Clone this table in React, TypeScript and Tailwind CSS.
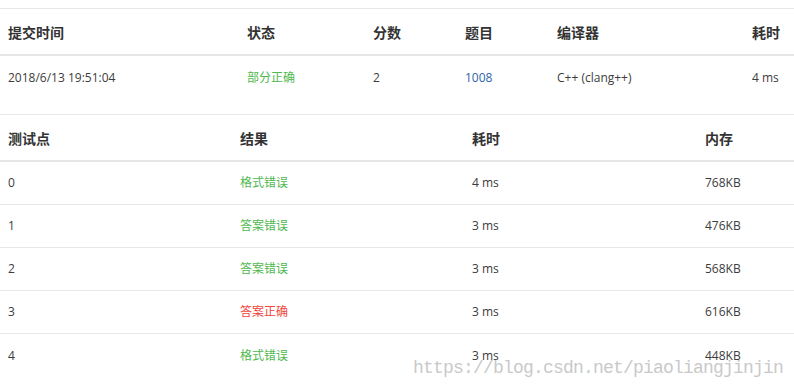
const summaryHead = ["提交时间", "状态", "分数", "题目", "编译器", "耗时"];

type Case = { id: string; result: string; ok: boolean; time: string; mem: string };

const cases: Case[] = [
  { id: "0", result: "格式错误", ok: false, time: "4 ms", mem: "768KB" },
  { id: "1", result: "答案错误", ok: false, time: "3 ms", mem: "476KB" },
  { id: "2", result: "答案错误", ok: false, time: "3 ms", mem: "568KB" },
  { id: "3", result: "答案正确", ok: true, time: "3 ms", mem: "616KB" },
  { id: "4", result: "格式错误", ok: false, time: "3 ms", mem: "448KB" },
];

const font = "font-['Open_Sans','Noto_Sans_CJK_SC',sans-serif]";

export default function App() {
  return (
    <div className={`relative w-[794px] h-[389px] overflow-hidden bg-white ${font}`}>
      {/* Submission summary */}
      <div className="mt-[8px] border-t border-[#e8e8e8]">
        <div className="grid grid-cols-[239px_126px_92px_92px_195px_1fr] pl-[8px] h-[47px] items-center pt-[1px] border-b-2 border-[#e6e6e6] text-[14px] font-bold text-[#333]">
          {summaryHead.map((h) => (
            <div key={h}>{h}</div>
          ))}
        </div>
        <div className="grid grid-cols-[239px_126px_92px_92px_195px_1fr] pl-[8px] h-[58px] pt-[13px] text-[12px] text-[#3c3c3c]">
          <div>2018/6/13 19:51:04</div>
          <div className="text-[#4fb84f]">部分正确</div>
          <div>2</div>
          <div className="text-[#2d64a8]">1008</div>
          <div>C++ (clang++)</div>
          <div>4 ms</div>
        </div>
      </div>

      {/* Test cases */}
      <div className="border-t border-[#e8e8e8]">
        <div className="grid grid-cols-[232px_232px_233px_1fr] pl-[8px] h-[47px] items-center pt-[1px] border-b-2 border-[#e6e6e6] text-[14px] font-bold text-[#333]">
          <div>测试点</div>
          <div>结果</div>
          <div>耗时</div>
          <div>内存</div>
        </div>
        {cases.map((c, i) => (
          <div
            key={c.id}
            className={`grid grid-cols-[232px_232px_233px_1fr] pl-[8px] h-[43px] items-center text-[12px] text-[#3c3c3c] ${
              i < cases.length - 1 ? "border-b border-[#e8e8e8]" : ""
            }`}
          >
            <div>{c.id}</div>
            <div className={c.ok ? "text-[#f0443a]" : "text-[#4fb84f]"}>{c.result}</div>
            <div>{c.time}</div>
            <div>{c.mem}</div>
          </div>
        ))}
      </div>

      {/* watermark */}
      <div className="absolute left-[413px] top-[358px] font-['Liberation_Mono',monospace] text-[18px] leading-[20px] tracking-[-0.8px] text-[#c9c9c9] whitespace-nowrap">
        https://blog.csdn.net/piaoliangjinjin
      </div>
    </div>
  );
}
